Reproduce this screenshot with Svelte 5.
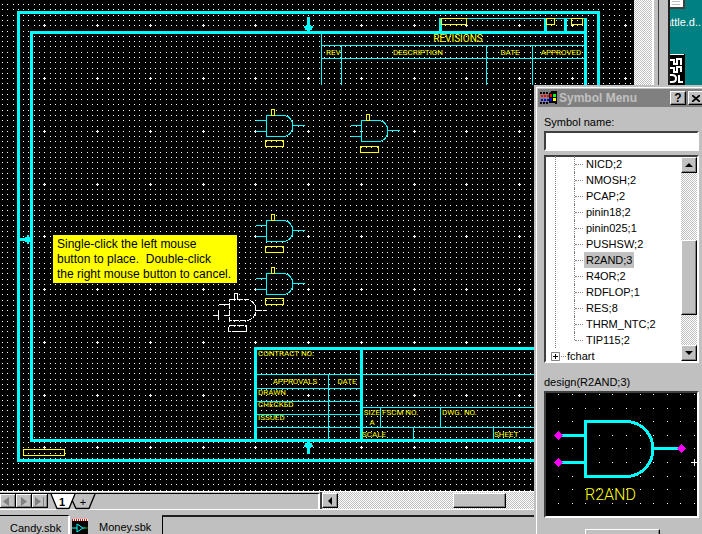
<script>
  const STEP = 5.275;
  const TILE = 211;
  const PHASE_X = 44.3;
  const PHASE_Y = 25.3;

  function axis(phase) {
    const out = [];
    for (let k = 0; k < 40; k++) {
      out.push({ at: Math.round(phase + STEP * k) % TILE, major: k % 10 === 0 });
    }
    return out;
  }

  const dots = axis(PHASE_X)
    .flatMap((x) =>
      axis(PHASE_Y).map((y) =>
        x.major && y.major
          ? `M${x.at - 1} ${y.at}h3v1h-3zM${x.at} ${y.at - 1}h1v3h-1z`
          : `M${x.at} ${y.at}h1v1h-1z`
      )
    )
    .join('');

  const previewDots = Array.from({ length: 11 }, (_, c) =>
    Array.from({ length: 10 }, (_, r) => `M${Math.round(12 + 13.6 * c)} ${Math.round(1 + 13.6 * r)}h1v1h-1z`).join('')
  ).join('');

  const gates = [
    { x: 266, y: 115, box: 25 },
    { x: 361, y: 120, box: 26 },
    { x: 266, y: 220, box: 26 },
    { x: 266, y: 273, box: 25 }
  ];

  const labels = [
    { t: 'REV', x: 326, y: 55 },
    { t: 'DESCRIPTION', x: 418, y: 55, mid: true },
    { t: 'DATE', x: 510, y: 55, mid: true },
    { t: 'APPROVED', x: 561, y: 55, mid: true },
    { t: 'CONTRACT NO:', x: 258, y: 356 },
    { t: 'APPROVALS', x: 295, y: 384, mid: true },
    { t: 'DATE', x: 347, y: 384, mid: true },
    { t: 'DRAWN', x: 258, y: 395 },
    { t: 'CHECKED', x: 258, y: 407 },
    { t: 'ISSUED', x: 258, y: 420 },
    { t: 'SIZE', x: 372, y: 415, mid: true },
    { t: 'A', x: 372, y: 425, mid: true },
    { t: 'FSCM NO.', x: 382, y: 415 },
    { t: 'DWG. NO.', x: 442, y: 415 },
    { t: 'SCALE', x: 362, y: 437 },
    { t: 'SHEET', x: 494, y: 437 }
  ];

  const symbols = ['NICD;2', 'NMOSH;2', 'PCAP;2', 'pinin18;2', 'pinin025;1', 'PUSHSW;2', 'R2AND;3', 'R4OR;2', 'RDFLOP;1', 'RES;8', 'THRM_NTC;2', 'TIP115;2'];
  let selected = $state('R2AND;3');
  let symbolName = $state('');
</script>

<div class="screen">
  <main class="workbook">
    <div class="sheet">
      <svg class="canvas" height="491" shape-rendering="crispEdges" role="img" aria-label="Schematic sheet">
        <defs>
          <pattern id="grid" width={TILE} height={TILE} patternUnits="userSpaceOnUse">
            <path d={dots} fill="#fff" />
          </pattern>
        </defs>
        <rect width="100%" height="100%" fill="#000" />
        <rect width="100%" height="100%" fill="url(#grid)" />

        <g fill="none" stroke="#0ff" stroke-width="3">
          <path d="M18.500 12.500H598.500V460.500H18.500Z" />
          <path d="M31.500 32.500H585.500V440.500H31.500Z" />
          <path d="M440.500 18V32M545.500 18V32M565.500 18V32M585.500 18V32" />
          <path d="M255.500 440V348.500H585M361.500 348V440" />
          <path d="M308.500 17V32M308.500 442V454M20 239.500H32" />
        </g>
        <g fill="#0ff">
          <path d="M306 25h5v1h2v2h-1v2h-2v3h-3v-3h-2v-2h-1v-2h2z" />
          <path d="M307 441h3v2h2v2h1v2h-2v1h-5v-1h-2v-2h1v-2h2z" />
          <path d="M25 237h2v-2h2v2h3v5h-3v2h-2v-2h-2z" />
        </g>
        <g fill="none" stroke="#0ff">
          <path d="M440 18.500H587M321.500 34V85M341.500 45V85M486.500 45V85M532.500 45V85M321 45.500H585M321 58.500H585" />
          <path d="M257 374.500H585M257 388.500H360M257 401.500H360M257 414.500H360M257 427.500H360M328.500 374V439" />
          <path d="M363 407.500H585M363 427.500H585M380.500 407V427M440.500 407V427M413.500 427V439M493.500 427V439" />
        </g>
        <g fill="none" stroke="#ff0">
          <path d="M441.500 18.500h25v6h-25zM546.500 18.500h8v6h-8zM571.500 18.500h11v6h-11zM23.500 449.500h41v6h-41z" />
        </g>

        {#each gates as g}
          <g fill="none" stroke="#0ff" transform="translate({g.x + 0.5} {g.y + 0.5})">
            <path d="M0 0H17A9.500 10.500 0 0 1 17 21H0ZM-11 5H0M-11 16H0M26 10H38" />
            <path stroke="#ff0" d="M5 -6h3v6h-3zM-1 {g.box}h18v6h-18z" />
          </g>
        {/each}
        <g fill="none" stroke="#fff" transform="translate(229.500 299.500)">
          <path stroke-dasharray="6 1" d="M0 0H17A9.500 10.500 0 0 1 17 21H0Z" />
          <path d="M-11 5H0M-11 10V20M-16 16H-11M-5 16H0M26 11H31M33 11H37M5 0V-6H8V0" />
          <path stroke-dasharray="7 1" d="M-1 26h18v6h-18z" />
        </g>

        <g class="lettering" fill="#ff0">
          <text class="heading" x="458" y="42" text-anchor="middle">REVISIONS</text>
          {#each labels as l}
            <text x={l.x} y={l.y} text-anchor={l.mid ? 'middle' : 'start'}>{l.t}</text>
          {/each}
        </g>
      </svg>
      <div class="vscroll checker"></div>
      <p class="hint">Single-click the left mouse<br />button to place.&nbsp; Double-click<br />the right mouse button to cancel.</p>
    </div>

    <div class="sheetbar">
      <div class="tabs">
        <button class="nav" aria-label="Previous sheet"><svg width="16" height="15"><path d="M9 3v9l-6-4.500z" fill="#808080" /></svg></button>
        <button class="nav" aria-label="Next sheet"><svg width="16" height="15"><path d="M5 3v9l6-4.500z" fill="#808080" /></svg></button>
        <button class="nav" aria-label="Last sheet"><svg width="16" height="15"><path d="M3 3v9l6-4.500zM11 3h1v9h-1z" fill="#808080" /></svg></button>
        <div class="sheettabs">
          <svg width="48" height="16" aria-hidden="true">
            <path d="M1 0L7 14.500H19L25 0Z" fill="#fff" />
            <path d="M1 0L7 14.500H19L25 0M22 6L26 14.500H39L45 0" fill="none" stroke="#000" stroke-width="1.300" />
          </svg>
          <button class="one">1</button>
          <button class="plus">+</button>
        </div>
      </div>
      <div class="hscroll checker">
        <button class="raised arrow" aria-label="Scroll left"><svg width="8" height="8"><path d="M6 0v8l-4-4z" /></svg></button>
        <div class="raised hthumb"></div>
      </div>
    </div>

    <div class="filebar">
      <button class="file candy">Candy.sbk</button>
      <button class="file money">
        <svg width="16" height="16" aria-hidden="true">
          <path d="M0 0h16v16H0z" />
          <path d="M0 1h16" stroke="#fff" stroke-width="2" />
          <path d="M0 1h16" stroke="#f00" stroke-width="2" stroke-dasharray="1 1" />
          <path d="M0 9h5M5 5v8l6-4zM11 9h3" fill="none" stroke="#0ff" />
          <path d="M12 9h4" stroke="#008000" />
        </svg>
        <span>Money.sbk</span>
      </button>
      <div class="rest"></div>
    </div>
  </main>

  <div class="gutter"></div>
  <aside class="desktop">
    <svg width="15" height="9" aria-hidden="true">
      <path d="M0 0h15v9H0z" fill="#404040" /><path d="M0 0h13v7H0z" fill="#fff" /><path d="M2 1.500h8M2 4.500h8" stroke="#c0c0c0" />
    </svg>
    <span>attle.d..</span>
    <svg width="15" height="31" aria-hidden="true">
      <path d="M0 0h15v31H0z" /><path d="M0 .5h14" stroke="#fff" />
      <path d="M0 6h4v4h3v-5h4v6M0 14h4v4h3v-5h4v5" fill="none" stroke="#fff" stroke-width="2" />
      <path d="M0 21h2q4 0 4 3.500t-4 3.500h-2M9 21v7h4" fill="none" stroke="#fff" stroke-width="2" />
    </svg>
  </aside>

  <section class="dialog" aria-label="Symbol Menu">
    <header>
      <svg width="17" height="14" shape-rendering="crispEdges" aria-hidden="true">
        <g fill="none" stroke-dasharray="2 1" stroke-width="2">
          <path d="M0 2h9M0 12h9" stroke="#000" />
          <path d="M1 5h8" stroke="#f00" />
          <path d="M1 9h8" stroke="#00f" />
        </g>
        <path d="M9 2l3-2h4l1 1v11l-1 1-2-1h-5z" fill="#000" />
        <path d="M10 3h2v3h-2z" fill="#f00" /><path d="M13 3h3v3h-3z" fill="#0f0" />
        <path d="M10 7h2v3h-2z" fill="#00f" /><path d="M13 7h3v3h-3z" fill="#ff0" />
      </svg>
      <h1>Symbol Menu</h1>
      <button class="raised cap" aria-label="Help">?</button>
      <button class="raised cap" aria-label="Close"><svg width="8" height="7"><path d="M0 0l8 7M8 0l-8 7" stroke="#000" stroke-width="1.700" /></svg></button>
    </header>
    <div class="body">
      <label for="symname">Symbol name:</label>
      <input id="symname" class="sunken" type="text" bind:value={symbolName} />
      <div class="list sunken">
        <div class="tree">
          <ul>
            {#each symbols as s}
              <li><button class:selected={s === selected} onclick={() => (selected = s)}>{s}</button></li>
            {/each}
          </ul>
          <div class="branch">
            <svg width="16" height="9" aria-hidden="true">
              <path d="M.5 .5h8v8h-8z" fill="#fff" stroke="#808080" /><path d="M2 4.500h5M4.500 2v5" stroke="#000" />
              <path d="M10 4.500h5" stroke="#808080" stroke-dasharray="1 1" />
            </svg>
            <button>fchart</button>
          </div>
        </div>
        <div class="listscroll checker">
          <button class="raised arrow" aria-label="Scroll up"><svg width="8" height="8"><path d="M0 6h8l-4-4z" /></svg></button>
          <div class="raised vthumb"></div>
          <button class="raised arrow" aria-label="Scroll down"><svg width="8" height="8"><path d="M0 2h8l-4 4z" /></svg></button>
        </div>
      </div>
      <p class="caption">design({selected})</p>
      <div class="preview sunken">
        <svg width="151" height="123" shape-rendering="crispEdges" role="img" aria-label="R2AND symbol">
          <path d={previewDots} fill="#fff" />
          <path d="M12 42.500H40M12 69.500H40M107 55.500H135" stroke="#0ff" stroke-width="3" />
          <path d="M39.500 28.500H80A27 27.500 0 0 1 80 83.500H39.500Z" fill="none" stroke="#0ff" stroke-width="3" />
          <path d="M12.500 38l4.500 4.500-4.500 4.500-4.500-4.500zM12.500 65l4.500 4.500-4.500 4.500-4.500-4.500zM135.500 51l4.500 4.500-4.500 4.500-4.500-4.500z" fill="#f0f" />
          <path d="M145 69.500h7M148.500 66v7" stroke="#fff" />
          <text x="39" y="107" fill="#ff0">R2AND</text>
        </svg>
      </div>
      <button class="raised action" aria-label="Place symbol"></button>
    </div>
  </section>
</div>

<style>
  :global(body) { background: #c0c0c0; }
  .screen {
    position: relative;
    display: flex;
    min-height: 100vh;
    max-height: 100vh;
    overflow: hidden;
    background: #c0c0c0;
    color: #000;
    font: 11px/16px "Liberation Sans", Arial, sans-serif;
  }
  button { margin: 0; padding: 0; border: 0; background: none; color: inherit; font: inherit; }
  svg { display: block; flex: none; }
  p, h1, ul { margin: 0; padding: 0; }

  .checker { background: conic-gradient(#fff 25%, #c0c0c0 0 50%, #fff 0 75%, #c0c0c0 0) 0 0 / 2px 2px; }
  .raised {
    box-sizing: border-box;
    background: #c0c0c0;
    border: 1px solid;
    border-color: #fff #000 #000 #fff;
    box-shadow: inset -1px -1px #808080;
  }
  .sunken {
    box-sizing: border-box;
    border: 2px solid;
    border-color: #404040 #fff #fff #404040;
  }
  .arrow { display: grid; place-items: center; flex: none; }

  .workbook { flex: 1; min-width: 0; display: flex; flex-direction: column; }
  .sheet { position: relative; display: flex; }
  .canvas { flex: 1; min-width: 0; }
  .lettering { font: 8px Roboto, sans-serif; }
  .lettering .heading { font-size: 10px; }
  .vscroll { width: 18px; border-right: 2px solid #fff; margin-right: 4px; }
  .hint {
    position: absolute;
    left: 53px;
    top: 235px;
    box-sizing: border-box;
    width: 184px;
    padding: 2px 0 1px 4px;
    background: #ff0;
    font-size: 12px;
    line-height: 15px;
    white-space: nowrap;
  }

  .sheetbar { display: flex; height: 17px; border-top: 1px solid #fff; border-bottom: 1px solid #fff; }
  .tabs { display: flex; box-sizing: border-box; width: 320px; padding-bottom: 1px; border-top: 1px solid #000; border-right: 2px solid #fff; margin-top: 1px; }
  .nav { width: 16px; border: solid; border-width: 0 1px 1px 0; border-color: #000; box-shadow: inset 1px 1px #fff, inset -1px -1px #808080; }
  .nav svg { width: 15px; }
  .sheettabs { display: grid; grid-template-columns: 22px 22px; padding-left: 2px; }
  .sheettabs svg { grid-area: 1 / 1 / 2 / 3; }
  .sheettabs .one { grid-area: 1 / 1; font-weight: bold; z-index: 1; padding-left: 2px; }
  .sheettabs .plus { grid-area: 1 / 2; z-index: 1; }
  .hscroll { flex: 1; display: flex; padding: 1px 0; border-left: 2px solid #404040; }
  .hscroll .arrow { width: 16px; }
  .hthumb { width: 53px; margin-left: 115px; }

  .filebar { display: flex; height: 20px; padding-top: 5px; }
  .file { flex: none; display: flex; align-items: center; padding-top: 4px; }
  .candy { width: 70px; padding-left: 10px; border-top: 1px solid #000; border-right: 2px solid #fff; box-sizing: border-box; }
  .money { width: 92px; gap: 11px; padding-left: 2px; box-sizing: border-box; }
  .rest { flex: 1; border-top: 2px solid #202020; border-left: 1px solid #000; }

  .gutter { width: 9px; border-left: 1px solid #404040; border-right: 2px solid #202020; }
  .desktop { width: 32px; background: #008080; color: #fff; overflow: hidden; }
  .desktop span { display: block; padding: 5px 0 24px; text-indent: -5px; white-space: nowrap; }

  .dialog {
    position: absolute;
    left: 534px;
    top: 85px;
    width: 166px;
    padding: 2px;
    border: 2px solid #c0c0c0;
    background: #c0c0c0;
    box-shadow: inset 1px 1px #fff;
  }
  header { display: flex; align-items: center; gap: 2px; height: 18px; padding-left: 2px; background: #808080; color: #c0c0c0; }
  h1 { flex: 1; font-size: 12px; line-height: 18px; white-space: nowrap; }
  .cap { display: grid; place-items: center; width: 16px; height: 14px; color: #000; font-weight: bold; font-size: 12px; line-height: 12px; }
  .body { display: flex; flex-direction: column; padding: 7px 5px 0 6px; }
  input { width: 100%; height: 20px; margin: 1px 0 4px; padding: 0 2px; background: #fff; font: inherit; border-radius: 0; outline: 0; }
  .list { display: flex; height: 208px; background: #fff; }
  .tree { flex: 1; min-width: 0; overflow: hidden; padding-left: 9px; margin-top: -1px; }
  ul { list-style: none; border-left: 1px dotted #808080; padding-left: 18px; }
  li { position: relative; height: 16px; padding-left: 10px; }
  li::before { content: ""; position: absolute; left: 0; top: 0; bottom: 0; border-left: 1px dotted #808080; }
  li:last-child::before { bottom: 8px; }
  li::after { content: ""; position: absolute; left: 1px; top: 8px; width: 8px; border-top: 1px dotted #808080; }
  li button { display: block; padding: 0 2px; height: 16px; }
  .selected { background: #c0c0c0; }
  .branch { display: flex; align-items: center; height: 16px; margin-left: -4px; }
  .listscroll { display: flex; flex-direction: column; width: 16px; }
  .listscroll .arrow { width: 16px; height: 16px; }
  .vthumb { height: 75px; margin-top: 67px; margin-bottom: auto; }
  .caption { padding: 11px 0 1px; }
  .preview { height: 127px; background: #000; overflow: hidden; }
  .preview text { font: 300 16px Roboto, sans-serif; }
  .action { width: 75px; height: 23px; margin: 11px 0 0 41px; }
</style>
